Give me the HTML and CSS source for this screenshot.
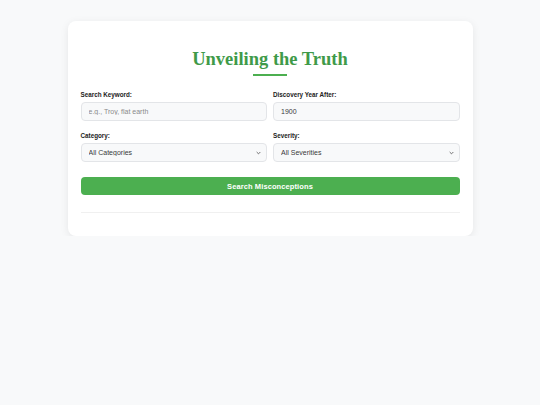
FILE: index.html
```html
<!DOCTYPE html>
<html lang="en">
<head>
<meta charset="utf-8">
<title>Unveiling the Truth</title>
<link rel="stylesheet" href="styles.css">
</head>
<body>
<div class="card">
  <h1 class="title">Unveiling the Truth</h1>
  <form class="form">
    <div class="field">
      <label class="label" for="kw">Search Keyword:</label>
      <input class="control" id="kw" type="text" placeholder="e.g., Troy, flat earth">
    </div>
    <div class="field">
      <label class="label" for="yr">Discovery Year After:</label>
      <input class="control" id="yr" type="text" value="1900">
    </div>
    <div class="field">
      <label class="label" for="cat">Category:</label>
      <select class="control select" id="cat"><option>All Categories</option></select>
    </div>
    <div class="field">
      <label class="label" for="sev">Severity:</label>
      <select class="control select" id="sev"><option>All Severities</option></select>
    </div>
    <button class="btn" type="button">Search Misconceptions</button>
  </form>
  <div class="divider"></div>
</div>
</body>
</html>
```
FILE: styles.css
```css
html, body {
  margin: 0;
  padding: 0;
  background: #f8f9fa;
  font-family: "Liberation Sans", Arial, sans-serif;
}
body {
  padding-top: 21px;
}
.card {
  width: 405px;
  box-sizing: border-box;
  margin: 0 auto;
  background: #ffffff;
  border-radius: 8px;
  box-shadow: 0 2px 8px rgba(0, 0, 0, 0.08);
  padding: 25px 13px 23px;
}
.title {
  margin: 0;
  text-align: center;
  font-family: "Liberation Serif", "Times New Roman", serif;
  font-size: 18.5px;
  line-height: 26px;
  font-weight: bold;
  color: #3f9a49;
}
.title::after {
  content: "";
  display: block;
  width: 34px;
  height: 2px;
  background: #4caf50;
  margin: 2px auto 0;
}
.form {
  margin-top: 14px;
  display: grid;
  grid-template-columns: 1fr 1fr;
  column-gap: 6px;
  row-gap: 10px;
}
.field {
  display: flex;
  flex-direction: column;
}
.label {
  font-size: 6.3px;
  line-height: 9px;
  font-weight: bold;
  color: #222;
  margin-bottom: 3px;
}
.control {
  box-sizing: border-box;
  height: 19px;
  border: 1px solid #e3e5e8;
  border-radius: 4px;
  background-color: #f8f9fa;
  font-family: "Liberation Sans", Arial, sans-serif;
  font-size: 7px;
  color: #3a3a3a;
  padding: 0 7px;
  outline: none;
}
.control::placeholder {
  color: #8a8a8a;
}
.select {
  -webkit-appearance: none;
  appearance: none;
  padding: 0 7px;
  background-image: url("data:image/svg+xml;utf8,<svg xmlns='http://www.w3.org/2000/svg' width='6' height='4' viewBox='0 0 6 4'><path d='M0.8 0.8 L3 3 L5.2 0.8' fill='none' stroke='%23555' stroke-width='1'/></svg>");
  background-repeat: no-repeat;
  background-position: right 5px center;
  background-size: 5px 4px;
}
.btn {
  grid-column: 1 / 3;
  margin-top: 5px;
  height: 18px;
  border: none;
  border-radius: 4px;
  background: #4caf50;
  color: #fff;
  font-family: "Liberation Sans", Arial, sans-serif;
  font-size: 7.5px;
  font-weight: bold;
  letter-spacing: 0.1px;
}
.divider {
  margin-top: 17px;
  border-top: 1px solid #f0f0f0;
}
```
